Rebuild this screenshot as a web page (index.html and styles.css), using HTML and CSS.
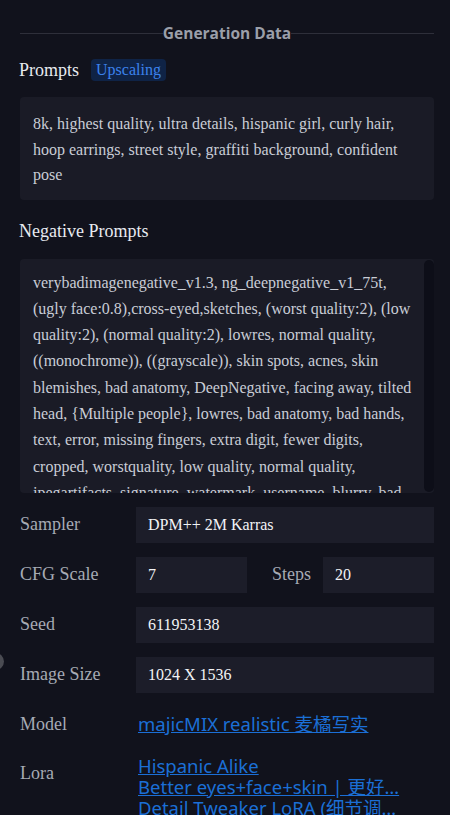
FILE: index.html
```html
<!DOCTYPE html>
<html>
<head>
<meta charset="utf-8">
<link rel="stylesheet" href="styles.css">
</head>
<body>
<div class="panel">
  <div class="divider"><span class="divider-title">Generation Data</span></div>

  <div class="section-head">
    <span class="section-title">Prompts</span>
    <span class="badge">Upscaling</span>
  </div>
  <div class="prompt-box">8k, highest quality, ultra details, hispanic girl, curly hair, hoop earrings, street style, graffiti background, confident pose</div>

  <div class="section-head neg-head">
    <span class="section-title">Negative Prompts</span>
  </div>
  <div class="neg-box">
    <div class="neg-text">verybadimagenegative_v1.3, ng_deepnegative_v1_75t, (ugly face:0.8),cross-eyed,sketches, (worst quality:2), (low quality:2), (normal quality:2), lowres, normal quality, ((monochrome)), ((grayscale)), skin spots, acnes, skin blemishes, bad anatomy, DeepNegative, facing away, tilted head, {Multiple people}, lowres, bad anatomy, bad hands, text, error, missing fingers, extra digit, fewer digits, cropped, worstquality, low quality, normal quality, jpegartifacts, signature, watermark, username, blurry, bad feet, cropped, poorly drawn hands, poorly drawn face, mutation, deformed</div>
    <div class="scrollbar"></div>
  </div>

  <div class="fields">
    <div class="row">
      <span class="label">Sampler</span>
      <div class="value">DPM++ 2M Karras</div>
    </div>
    <div class="row">
      <span class="label">CFG Scale</span>
      <div class="split">
        <div class="value">7</div>
        <span class="label inner-label">Steps</span>
        <div class="value">20</div>
      </div>
    </div>
    <div class="row">
      <span class="label">Seed</span>
      <div class="value">611953138</div>
    </div>
    <div class="row size-row">
      <span class="handle"></span>
      <span class="label">Image Size</span>
      <div class="value">1024 X 1536</div>
    </div>
    <div class="row link-row model-row">
      <span class="label">Model</span>
      <div class="links"><a href="#">majicMIX realistic 麦橘写实</a></div>
    </div>
    <div class="row link-row lora-row">
      <span class="label">Lora</span>
      <div class="links">
        <a href="#">Hispanic Alike</a>
        <a href="#">Better eyes+face+skin | 更好…</a>
        <a href="#">Detail Tweaker LoRA (细节调…</a>
      </div>
    </div>
  </div>
</div>
</body>
</html>
```

FILE: styles.css
```css
html, body {
  margin: 0;
  padding: 0;
  background: #11121c;
  height: 815px;
  overflow: hidden;
}

.panel {
  padding: 22px 16px 0 20px;
  font-family: "Liberation Serif", "Noto Sans CJK SC", serif;
  color: #e4e6ec;
}

.divider {
  display: flex;
  align-items: center;
  height: 22px;
}
.divider::before,
.divider::after {
  content: "";
  flex: 1;
  height: 1px;
  background: #2e2f3a;
}
.divider-title {
  font-family: "Open Sans", "Noto Sans", sans-serif;
  font-weight: 700;
  font-size: 15.5px;
  color: #9b9fa9;
}

.section-head {
  display: flex;
  align-items: center;
  gap: 12px;
  margin-top: 14px;
  height: 24px;
}
.section-title {
  font-size: 18px;
  color: #e8eaf0;
  margin-left: -1px;
}
.badge {
  font-size: 16px;
  color: #3c82ec;
  background: #0f2346;
  border-radius: 4px;
  padding: 1px 5px 2px;
  line-height: 19px;
}

.prompt-box {
  margin-top: 15px;
  background: #1a1b26;
  border-radius: 4px;
  padding: 14px 13px 12px;
  font-size: 16px;
  line-height: 25.5px;
  color: #c9cdd6;
}

.neg-head {
  margin-top: 20px;
}

.neg-box {
  margin-top: 15px;
  background: #1a1b26;
  border-radius: 4px;
  display: flex;
  height: 234px;
  overflow: hidden;
}
.neg-text {
  flex: 1;
  padding: 11px 2px 0 13px;
  font-size: 16px;
  line-height: 26.3px;
  color: #c9cdd6;
  overflow: hidden;
}
.scrollbar {
  width: 10px;
  background: #0d0e18;
  border-radius: 5px;
  margin: 1px 0;
}

.fields {
  margin-top: 14px;
  display: flex;
  flex-direction: column;
  gap: 14px;
}
.row {
  display: grid;
  grid-template-columns: 116px 1fr;
  align-items: center;
  min-height: 36px;
  position: relative;
}
.label {
  font-size: 18px;
  color: #a6aab4;
}
.value {
  background: #1c1d29;
  height: 36px;
  display: flex;
  align-items: center;
  padding-left: 12px;
  font-size: 16px;
  color: #f2f3f6;
}
.split {
  display: grid;
  grid-template-columns: 111px 76px 111px;
  align-items: center;
}
.inner-label {
  padding-left: 25px;
}
.handle {
  position: absolute;
  left: -33px;
  top: -4px;
  width: 17px;
  height: 17px;
  border-radius: 50%;
  background: #4a4b52;
}

.link-row {
  align-items: start;
}
.model-row {
  margin-top: 6px;
}
.lora-row {
  margin-top: -8px;
}
.link-row .label {
  line-height: 22px;
}
.lora-row .label {
  margin-top: 7px;
}
.links {
  display: flex;
  flex-direction: column;
  padding-left: 2px;
}
.links a {
  font-family: "Noto Sans", "Noto Sans CJK SC", sans-serif;
  font-size: 18.5px;
  line-height: 21px;
  color: #1b6fd6;
  text-decoration: underline;
  white-space: nowrap;
}
```
